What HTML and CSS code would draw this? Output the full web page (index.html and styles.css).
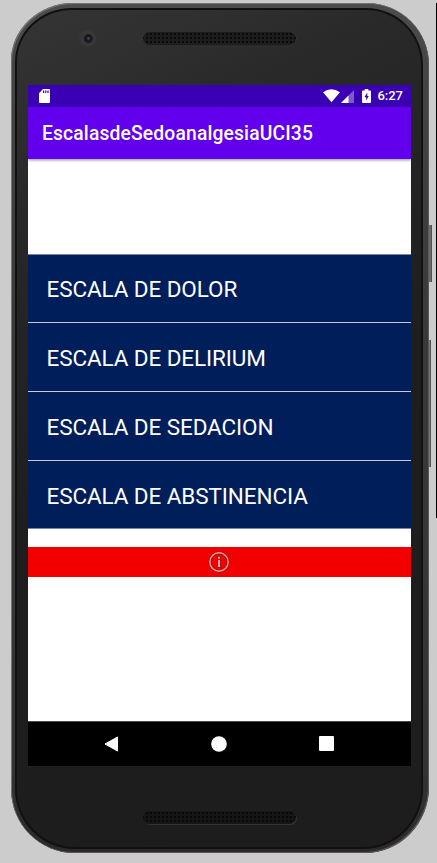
FILE: index.html
```html
<!DOCTYPE html>
<html lang="es">
<head>
<meta charset="utf-8">
<title>EscalasdeSedoanalgesiaUCI35</title>
<link rel="stylesheet" href="styles.css">
</head>
<body>
<div class="edge"></div>
<div class="button power"></div>
<div class="button volume"></div>
<main class="phone">
  <div class="face">
    <header class="top">
      <span class="camera"></span>
      <span class="speaker"></span>
    </header>
    <div class="screen">
      <div class="status">
        <svg class="sd" width="11" height="14" viewBox="0 0 11 14"><path fill="#fff" fill-rule="evenodd" d="M4 0h6q1 0 1 1v12q0 1-1 1H1q-1 0-1-1V4.200zM4 1.500v2.600h1.200V1.500zM6.200 1.500v2.600h1.200V1.500zM8.400 1.500v2.600h1.200V1.500z"/></svg>
        <svg class="wifi" width="17" height="14" viewBox="0 0 17 14"><path fill="#fff" d="M0 3.300Q8.300-3 17 3.300L8.500 13.300z"/></svg>
        <svg class="signal" width="13" height="13" viewBox="0 0 13 13"><path fill="#fff" fill-opacity=".35" d="M13 0v13H0z"/><path fill="#fff" d="M7.500 5.500V13H0z"/></svg>
        <svg class="battery" width="9" height="14" viewBox="0 0 9 14"><path fill="#fff" fill-rule="evenodd" d="M2.700 0h3.600v1.400H8q1 0 1 1V13q0 1-1 1H1q-1 0-1-1V2.400q0-1 1-1h1.700zM5.300 3.600L2.400 8.200h1.800v3.200l2.600-4.400H5.300z"/></svg>
        <span class="time">6:27</span>
      </div>
      <div class="appbar"><h1>EscalasdeSedoanalgesiaUCI35</h1></div>
      <div class="content">
        <ul class="list">
          <li><span>ESCALA DE DOLOR</span></li>
          <li><span>ESCALA DE DELIRIUM</span></li>
          <li><span>ESCALA DE SEDACION</span></li>
          <li><span>ESCALA DE ABSTINENCIA</span></li>
        </ul>
        <div class="info">
          <svg width="22" height="22" viewBox="0 0 22 22"><g fill="none" stroke="#7d2020" stroke-opacity=".65"><circle cx="11" cy="11" r="9.200" stroke-width="3"/><path stroke-width="3.600" d="M11 5v3M11 9v8"/></g><circle cx="11" cy="11" r="9.200" fill="none" stroke="#ee9b9b" stroke-width="1.400"/><path fill="#e5a0a0" d="M10 5.700h2v2h-2zM10 9h2v7h-2z"/></svg>
        </div>
      </div>
      <nav class="nav">
        <svg width="15" height="16" viewBox="0 0 15 16"><path fill="#fff" stroke="#fff" stroke-linejoin="round" d="M13.500 1v14L1 8z"/></svg>
        <svg width="16" height="16" viewBox="0 0 16 16"><circle cx="8" cy="8" r="7.800" fill="#fff"/></svg>
        <svg width="15" height="15" viewBox="0 0 15 15"><rect width="15" height="15" rx="1" fill="#fff"/></svg>
      </nav>
    </div>
    <footer class="bottom"><span class="speaker low"></span></footer>
  </div>
</main>
</body>
</html>
```
FILE: styles.css
```css
* { box-sizing: border-box; }
body {
  margin: 0;
  width: 437px;
  height: 863px;
  padding: 3px 8px 10px 11px;
  overflow: hidden;
  position: relative;
  background: #cccccc;
  font-family: Roboto, sans-serif;
  color: #fff;
}
.edge { position: absolute; left: 436px; top: 3px; width: 1px; height: 515px; background: #000; }
.button { position: absolute; background: linear-gradient(90deg, #444, #777 50%, #444); }
.power { left: 428px; top: 225px; width: 4px; height: 57px; }
.volume { left: 428px; top: 340px; width: 3px; height: 127px; }
.phone {
  position: relative;
  width: 418px;
  height: 850px;
  padding: 5px 6px 4px 4px;
  border-radius: 62px 62px 64px 64px / 58px 62px 66px 64px;
  background: linear-gradient(180deg, #4c4c4c 0, #444 8%, #3a3838 40%, #343232 90%, #2b2929 100%);
  box-shadow: inset 1px 1px 0 #737373, inset -1px -1px 0 #5a5858;
}
.face {
  height: 841px;
  padding: 0 10px 0 11px;
  border: 2px solid #111;
  border-radius: 57px 57px 60px 60px / 54px 57px 60px 60px;
  background: linear-gradient(155deg, #353535 0, #282828 20%, #1e1e1e 50%, #1d1d1e 100%);
}
.top { height: 75px; display: flex; padding: 20px 0 0 51px; }
.camera {
  width: 17px; height: 17px;
  border-radius: 50%;
  background: radial-gradient(circle at 55% 50%, #65505a 0, #19181e 2px, #1b1a20 4px, #393939 5px, #363636 8px);
}
.speaker {
  width: 153px; height: 13px;
  margin: 2px 0 0 47px;
  border-radius: 7px;
  background: radial-gradient(circle, #090909 0 .8px, transparent 1.4px) 2px 0 / 4px 4px, #1d1d1d;
  box-shadow: 1px 0 0 #333;
}
.screen { width: 383px; height: 681px; background: #fff; }
.status { height: 22px; padding: 0 8px 0 11px; display: flex; align-items: center; background: #3a00b4; }
.sd { margin-right: auto; }
.signal { margin: 0 8px 0 1px; }
.time { margin-left: 6px; font-size: 13px; font-weight: 500; line-height: 22px; }
.appbar {
  height: 52px;
  padding: 2px 0 0 14px;
  display: flex;
  align-items: center;
  background: #6200ee;
  box-shadow: 0 1px 3px rgba(0, 0, 0, .45);
  clip-path: inset(0 0 -5px 0);
}
h1 { margin: 0; font-size: 19.300px; font-weight: 500; line-height: 24px; letter-spacing: .15px; }
.content { height: 562px; padding-top: 95px; }
.list { margin: 0; padding: 0; list-style: none; border-top: 1px solid #7784a2; border-bottom: 1px solid #7784a2; background: #001e5a; }
li { height: 67px; padding: 1px 0 0 18.500px; display: flex; align-items: center; font-size: 22.500px; letter-spacing: -.1px; }
li + li { height: 69px; padding-top: 2px; border-top: 1px solid #c5c9d2; }
li:last-child { height: 68px; padding-top: 2px; }
.info { height: 30px; margin-top: 18px; padding: 0 1px 0 0; display: flex; align-items: center; justify-content: center; background: #f20000; }
.nav { height: 45px; padding: 0 77px 1px 76px; display: flex; align-items: center; justify-content: space-between; background: #000; border-top: 1px solid #4a4f4f; }
.bottom { height: 80px; padding: 45px 0 0 115px; }
.low { display: block; margin: 0; background-color: #151515; box-shadow: 1px 1px 0 #333; }
```
